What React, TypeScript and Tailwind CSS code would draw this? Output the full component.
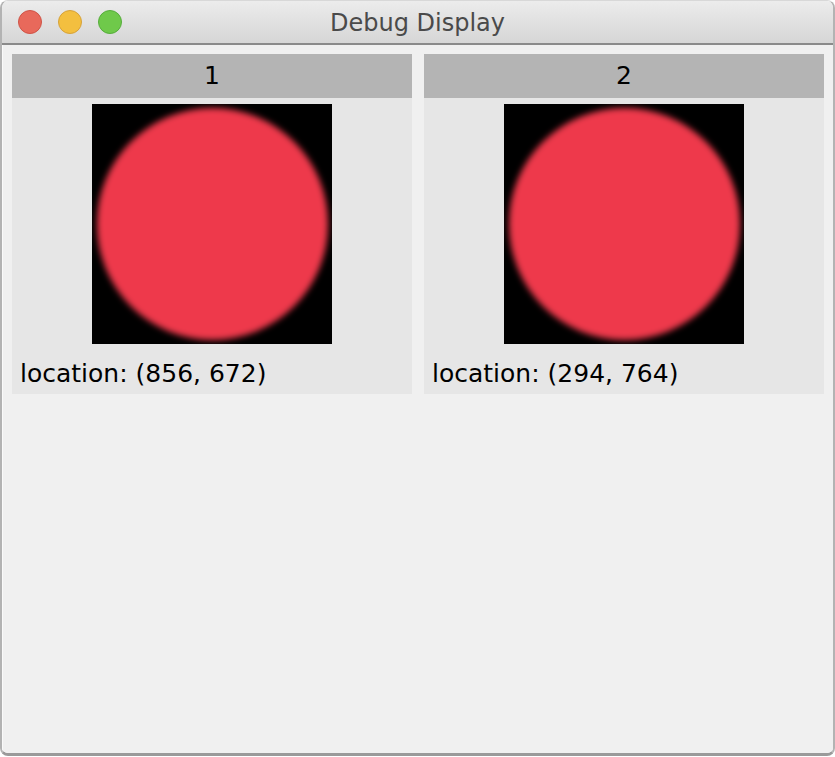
import React from "react";

function Tile({ n, loc }: { n: string; loc: string }) {
  return (
    <div className="w-[400px] bg-[#e6e6e6] flex flex-col">
      <div className="h-[44px] bg-[#b4b4b4] flex items-center justify-center text-[25px] leading-[30px] text-black">
        {n}
      </div>
      <div className="flex justify-center pt-[6px]">
        <div className="relative w-[240px] h-[240px] bg-black overflow-hidden">
          <div className="absolute left-[5px] top-[4px] w-[231px] h-[232px] rounded-full bg-[#ee394b] blur-[3px]" />
        </div>
      </div>
      <div className="pl-[8px] pt-[15px] pb-[5px] text-[25px] leading-[30px] text-black">
        {loc}
      </div>
    </div>
  );
}

export default function App() {
  return (
    <div
      className="w-[835px] h-[757px] bg-white"
      style={{ fontFamily: '"DejaVu Sans", "Liberation Sans", sans-serif' }}
    >
      <div className="w-[835px] h-[756px] flex flex-col rounded-[8px] overflow-hidden border-x-[2px] border-x-[#b3b3b3] border-b-[3px] border-b-[#9a9a9a] border-t border-t-[#d8d8d8]">
        <div className="relative h-[44px] shrink-0 bg-gradient-to-b from-[#ececec] to-[#d6d6d6] border-b-[2px] border-b-[#8a8a8a] flex items-center justify-center">
          <div className="absolute left-[16px] top-[9px] flex gap-[16px]">
            <div className="w-[24px] h-[24px] rounded-full bg-[#e8695b] border border-[#cf5447]" />
            <div className="w-[24px] h-[24px] rounded-full bg-[#f3bf3f] border border-[#d6a23a]" />
            <div className="w-[24px] h-[24px] rounded-full bg-[#6fc94a] border border-[#56ad3c]" />
          </div>
          <span className="text-[24px] leading-[30px] text-[#4a4a4a] pt-[2px]">Debug Display</span>
        </div>
        <div className="flex-1 bg-[#f0f0f0] border-l border-l-[#fafafa] pl-[9px] pr-[7px] pt-[9px]">
          <div className="flex gap-[12px]">
            <Tile n="1" loc="location: (856, 672)" />
            <Tile n="2" loc="location: (294, 764)" />
          </div>
        </div>
      </div>
    </div>
  );
}
